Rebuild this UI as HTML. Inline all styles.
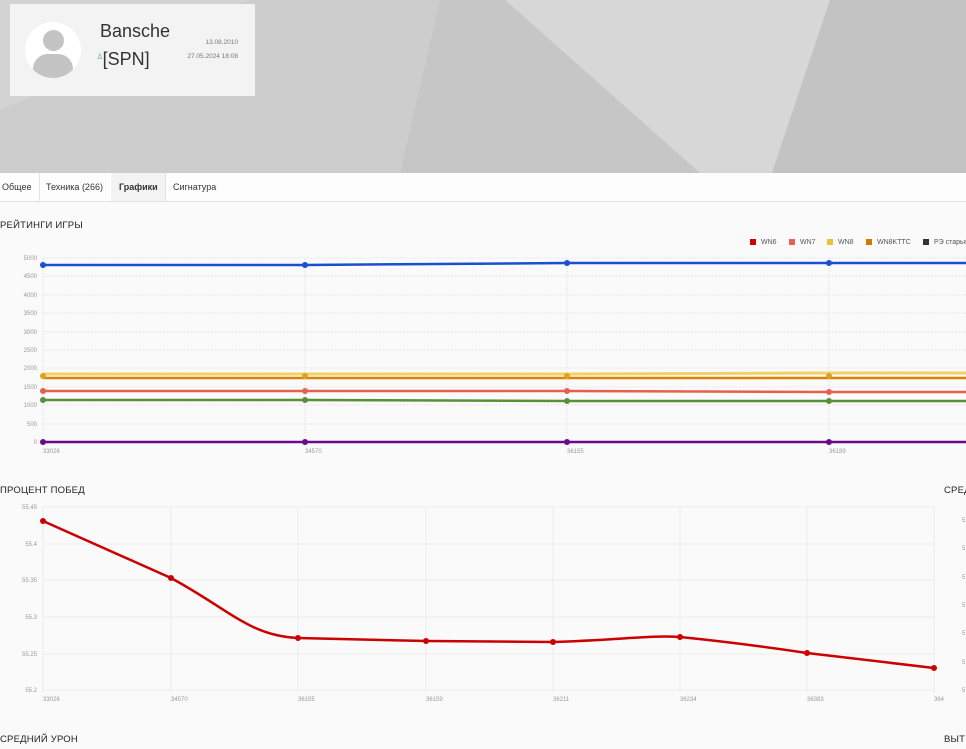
<!DOCTYPE html>
<html><head><meta charset="utf-8"><style>
body{margin:0;width:966px;height:749px;overflow:hidden;background:#fafafa;font-family:"Liberation Sans",sans-serif;position:relative}
.ab{position:absolute}
.tab{position:absolute;top:173px;height:28px;line-height:28px;font-size:9px;color:#333;padding:0 8px;border-right:1px solid #e4e4e4}
.h{position:absolute;font-size:9.5px;color:#222;letter-spacing:0.2px}
.lg{position:absolute;top:239px;font-size:7px;color:#555;white-space:nowrap}
.lg i{display:inline-block;width:6px;height:6px;margin-right:5px;vertical-align:-1px}
</style></head><body>
<svg class="ab" style="left:0;top:0" width="966" height="173">
<rect width="966" height="173" fill="#c6c6c6"/>
<polygon points="0,0 440,0 400,173 0,173" fill="#cdcdcd"/>
<polygon points="0,0 250,0 0,110" fill="#d3d3d3"/>
<polygon points="505,0 830,0 772,173 700,173" fill="#d7d7d7"/>
<polygon points="830,0 966,0 966,173 772,173" fill="#c3c3c3"/>
</svg>
<div class="ab" style="left:10px;top:4px;width:245px;height:92px;background:#f3f3f3"></div>
<div class="ab" style="left:25px;top:22px;width:56px;height:56px;border-radius:50%;background:#fff;overflow:hidden">
<div class="ab" style="left:18px;top:8px;width:21px;height:21px;border-radius:50%;background:#c4c4c4"></div>
<div class="ab" style="left:8px;top:32px;width:40px;height:24px;border-radius:20px 20px 12px 12px;background:#c4c4c4"></div></div>
<div class="ab" style="left:100px;top:21px;font-size:18px;color:#333">Bansche</div>
<div class="ab" style="left:97px;top:49px;font-size:18px;color:#333"><span style="font-size:8px;color:#6a6;vertical-align:6px">ꕔ</span>[SPN]</div>
<div class="ab" style="left:150px;top:39px;width:88px;text-align:right;font-size:6.5px;color:#777">13.08.2010</div>
<div class="ab" style="left:150px;top:53px;width:88px;text-align:right;font-size:6.5px;color:#777">27.05.2024 18:08</div>
<div class="ab" style="left:0;top:173px;width:966px;height:28px;background:#fdfdfd;border-bottom:1px solid #e2e2e2"></div>
<div class="tab" style="left:-6px">Общее</div>
<div class="tab" style="left:38px">Техника (266)</div>
<div class="tab" style="left:111px;background:#f3f3f3;font-weight:bold;width:38px">Графики</div>
<div class="tab" style="left:165px;border:none">Сигнатура</div>
<div class="h" style="left:0;top:220px">РЕЙТИНГИ ИГРЫ</div>
<div class="h" style="left:0;top:485px">ПРОЦЕНТ ПОБЕД</div>
<div class="h" style="left:0;top:734px">СРЕДНИЙ УРОН</div>
<div class="h" style="left:944px;top:485px">СРЕД</div>
<div class="h" style="left:944px;top:734px">ВЫТ</div>
<div class="lg" style="left:750px"><i style="background:#c00"></i>WN6</div>
<div class="lg" style="left:789px"><i style="background:#e5604f"></i>WN7</div>
<div class="lg" style="left:827px"><i style="background:#f0c030"></i>WN8</div>
<div class="lg" style="left:866px"><i style="background:#cc7a00"></i>WN8KTTC</div>
<div class="lg" style="left:923px"><i style="background:#333"></i>РЭ старый</div>
<svg class="ab" style="left:0;top:0" width="966" height="749" font-family="Liberation Sans" font-size="6" fill="#999">
<g stroke="#e8e8e8" stroke-width="1" stroke-dasharray="2,1">
<line x1="43" y1="258" x2="966" y2="258"/><line x1="43" y1="276" x2="966" y2="276"/><line x1="43" y1="295" x2="966" y2="295"/><line x1="43" y1="313" x2="966" y2="313"/><line x1="43" y1="332" x2="966" y2="332"/><line x1="43" y1="350" x2="966" y2="350"/><line x1="43" y1="368" x2="966" y2="368"/><line x1="43" y1="387" x2="966" y2="387"/><line x1="43" y1="405" x2="966" y2="405"/><line x1="43" y1="424" x2="966" y2="424"/>
<line x1="43" y1="258" x2="43" y2="445"/><line x1="305" y1="258" x2="305" y2="445"/><line x1="567" y1="258" x2="567" y2="445"/><line x1="829" y1="258" x2="829" y2="445"/>
</g>
<g stroke="#ececec" stroke-width="1">
<line x1="43" y1="507" x2="934" y2="507"/><line x1="43" y1="544" x2="934" y2="544"/><line x1="43" y1="580" x2="934" y2="580"/><line x1="43" y1="617" x2="934" y2="617"/><line x1="43" y1="654" x2="934" y2="654"/><line x1="43" y1="690" x2="934" y2="690"/>
<line x1="43" y1="507" x2="43" y2="693"/><line x1="171" y1="507" x2="171" y2="693"/><line x1="298" y1="507" x2="298" y2="693"/><line x1="426" y1="507" x2="426" y2="693"/><line x1="553" y1="507" x2="553" y2="693"/><line x1="680" y1="507" x2="680" y2="693"/><line x1="807" y1="507" x2="807" y2="693"/><line x1="934" y1="507" x2="934" y2="693"/>
</g>
<g text-anchor="end"><text x="37" y="260">5000</text><text x="37" y="278">4500</text><text x="37" y="297">4000</text><text x="37" y="315">3500</text><text x="37" y="334">3000</text><text x="37" y="352">2500</text><text x="37" y="370">2000</text><text x="37" y="389">1500</text><text x="37" y="407">1000</text><text x="37" y="426">500</text><text x="37" y="444">0</text>
<text x="37" y="509">55.45</text><text x="37" y="546">55.4</text><text x="37" y="582">55.35</text><text x="37" y="619">55.3</text><text x="37" y="656">55.25</text><text x="37" y="692">55.2</text></g>
<text x="43" y="453">33026</text><text x="305" y="453">34570</text><text x="567" y="453">36155</text><text x="829" y="453">36189</text>
<text x="43" y="701">33026</text><text x="171" y="701">34570</text><text x="298" y="701">36155</text><text x="426" y="701">36159</text><text x="553" y="701">36211</text><text x="680" y="701">36234</text><text x="807" y="701">36383</text><text x="934" y="701">364</text>
<g fill="none" stroke-width="2.5">
<polyline points="43,374 305,374 567,374 829,373 966,373" stroke="#f2c94c" stroke-width="3" opacity=".85"/>
<polyline points="43,378 305,378 567,378 829,378 966,378" stroke="#d88400"/>
<polyline points="43,391 305,391 567,391 829,392 966,392" stroke="#e5604f"/>
<polyline points="43,400 305,400 567,401 829,401 966,401" stroke="#5a8f3a"/>
<polyline points="43,442 966,442" stroke="#6a0a8a"/>
<polyline points="43,265 305,265 567,263 829,263 966,263" stroke="#1a4fd0"/>
<path d="M43,521 L171,578 C230,610 250,636 298,638 L426,641 L553,642 C620,640 650,635 680,637 C720,641 760,646 807,653 L934,668" stroke="#cc0000"/>
</g>
<g fill="#1a4fd0"><circle cx="43" cy="265" r="3"/><circle cx="305" cy="265" r="3"/><circle cx="567" cy="263" r="3"/><circle cx="829" cy="263" r="3"/></g>
<g fill="#e0a020"><circle cx="43" cy="376" r="3"/><circle cx="305" cy="376" r="3"/><circle cx="567" cy="376" r="3"/><circle cx="829" cy="376" r="3"/></g>
<g fill="#e5604f"><circle cx="43" cy="391" r="3"/><circle cx="305" cy="391" r="3"/><circle cx="567" cy="391" r="3"/><circle cx="829" cy="392" r="3"/></g>
<g fill="#5a8f3a"><circle cx="43" cy="400" r="3"/><circle cx="305" cy="400" r="3"/><circle cx="567" cy="401" r="3"/><circle cx="829" cy="401" r="3"/></g>
<g fill="#6a0a8a"><circle cx="43" cy="442" r="3"/><circle cx="305" cy="442" r="3"/><circle cx="567" cy="442" r="3"/><circle cx="829" cy="442" r="3"/></g>
<g fill="#cc0000"><circle cx="43" cy="521" r="3"/><circle cx="171" cy="578" r="3"/><circle cx="298" cy="638" r="3"/><circle cx="426" cy="641" r="3"/><circle cx="553" cy="642" r="3"/><circle cx="680" cy="637" r="3"/><circle cx="807" cy="653" r="3"/><circle cx="934" cy="668" r="3"/></g>
<g><text x="962" y="522">5</text><text x="962" y="550">5</text><text x="962" y="579">5</text><text x="962" y="607">5</text><text x="962" y="635">5</text><text x="962" y="664">5</text><text x="962" y="692">5</text></g>
</svg>
</body></html>
